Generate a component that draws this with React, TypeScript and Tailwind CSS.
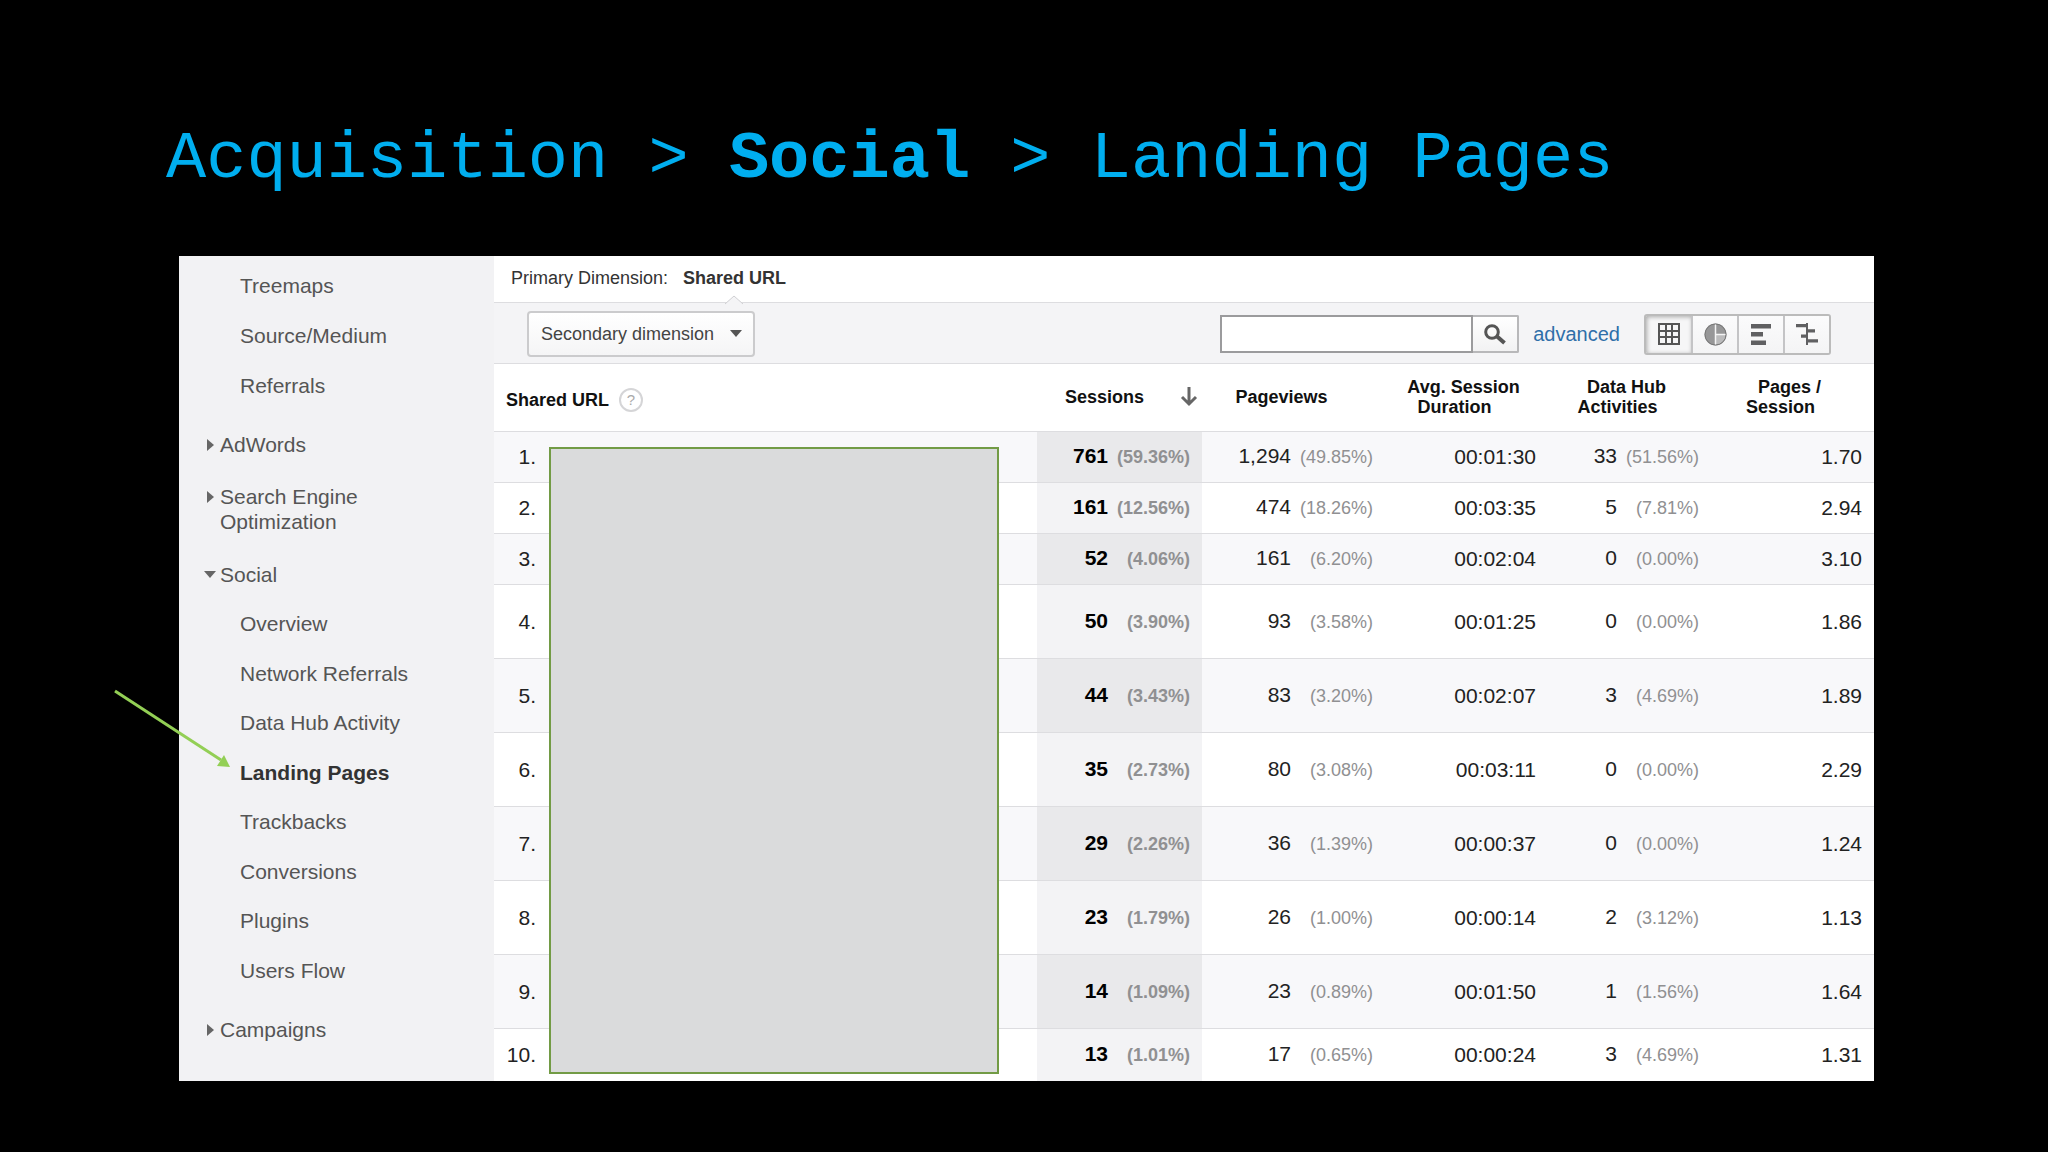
import React from "react";

type Row = {
  sessions: string;
  sessionsPct: string;
  views: string;
  viewsPct: string;
  duration: string;
  hub: string;
  hubPct: string;
  pages: string;
  tall?: boolean;
};

const rows: Row[] = [
  { sessions: "761", sessionsPct: "(59.36%)", views: "1,294", viewsPct: "(49.85%)", duration: "00:01:30", hub: "33", hubPct: "(51.56%)", pages: "1.70" },
  { sessions: "161", sessionsPct: "(12.56%)", views: "474", viewsPct: "(18.26%)", duration: "00:03:35", hub: "5", hubPct: "(7.81%)", pages: "2.94" },
  { sessions: "52", sessionsPct: "(4.06%)", views: "161", viewsPct: "(6.20%)", duration: "00:02:04", hub: "0", hubPct: "(0.00%)", pages: "3.10" },
  { sessions: "50", sessionsPct: "(3.90%)", views: "93", viewsPct: "(3.58%)", duration: "00:01:25", hub: "0", hubPct: "(0.00%)", pages: "1.86", tall: true },
  { sessions: "44", sessionsPct: "(3.43%)", views: "83", viewsPct: "(3.20%)", duration: "00:02:07", hub: "3", hubPct: "(4.69%)", pages: "1.89", tall: true },
  { sessions: "35", sessionsPct: "(2.73%)", views: "80", viewsPct: "(3.08%)", duration: "00:03:11", hub: "0", hubPct: "(0.00%)", pages: "2.29", tall: true },
  { sessions: "29", sessionsPct: "(2.26%)", views: "36", viewsPct: "(1.39%)", duration: "00:00:37", hub: "0", hubPct: "(0.00%)", pages: "1.24", tall: true },
  { sessions: "23", sessionsPct: "(1.79%)", views: "26", viewsPct: "(1.00%)", duration: "00:00:14", hub: "2", hubPct: "(3.12%)", pages: "1.13", tall: true },
  { sessions: "14", sessionsPct: "(1.09%)", views: "23", viewsPct: "(0.89%)", duration: "00:01:50", hub: "1", hubPct: "(1.56%)", pages: "1.64", tall: true },
  { sessions: "13", sessionsPct: "(1.01%)", views: "17", viewsPct: "(0.65%)", duration: "00:00:24", hub: "3", hubPct: "(4.69%)", pages: "1.31" },
];

function SubLinks({ items, active }: { items: string[]; active?: string }) {
  return (
    <>
      {items.map((item) => (
        <li key={item} className="flex items-center pl-[61px]">
          <a
            href="#"
            className={
              item === active
                ? "relative font-bold text-[#333]"
                : "text-[#555]"
            }
          >
            {item === active && <PointerArrow />}
            {item}
          </a>
        </li>
      ))}
    </>
  );
}

function PointerArrow() {
  return (
    <svg
      aria-hidden="true"
      width="118"
      height="80"
      viewBox="0 0 118 80"
      className="pointer-events-none absolute right-full bottom-[16px] mr-[8px]"
    >
      <line x1="1" y1="2" x2="107" y2="71" stroke="#93cf55" strokeWidth="3" />
      <path d="M116 78 L103 77 L110 66 Z" fill="#93cf55" />
    </svg>
  );
}

function Group({ label, open }: { label: string; open?: boolean }) {
  return (
    <button
      type="button"
      aria-expanded={!!open}
      className="flex w-full items-start pl-[25px] text-left text-[#555]"
    >
      <span className="flex h-[25px] w-4 shrink-0 items-center">
        {open ? (
          <svg width="12" height="7" viewBox="0 0 12 7" aria-hidden="true">
            <path d="M0 0 H12 L6 7 Z" fill="#666" />
          </svg>
        ) : (
          <svg width="10" height="12" viewBox="0 0 10 12" aria-hidden="true">
            <path d="M3 0 L10 6 L3 12 Z" fill="#666" />
          </svg>
        )}
      </span>
      <span className="w-[160px]">{label}</span>
    </button>
  );
}

function Sidebar() {
  return (
    <nav
      aria-label="Reports"
      className="w-[315px] shrink-0 bg-[#f2f2f4] pt-[5px] text-[21px] leading-[25px]"
    >
      <ul className="grid h-[149px] auto-rows-fr">
        <SubLinks items={["Treemaps", "Source/Medium", "Referrals"]} />
      </ul>
      <div className="mt-[22px]">
        <Group label="AdWords" />
      </div>
      <div className="mt-[27px]">
        <Group label="Search Engine Optimization" />
      </div>
      <div className="mt-[28px]">
        <Group label="Social" open />
      </div>
      <ul className="mt-[12px] grid h-[396px] auto-rows-fr">
        <SubLinks
          active="Landing Pages"
          items={[
            "Overview",
            "Network Referrals",
            "Data Hub Activity",
            "Landing Pages",
            "Trackbacks",
            "Conversions",
            "Plugins",
            "Users Flow",
          ]}
        />
      </ul>
      <div className="mt-[22px]">
        <Group label="Campaigns" />
      </div>
    </nav>
  );
}

function Toolbar() {
  const view =
    "flex w-[46px] items-center justify-center border-l-2 border-[#c4c4c6] bg-linear-to-b from-[#fbfbfc] to-[#f4f4f5]";
  return (
    <div className="flex h-[61px] items-center border-b border-[#dddde0] bg-[#f4f4f6] pt-[2px] pr-[43px] pl-[33px]">
      <div className="relative">
        <select
          aria-label="Secondary dimension"
          className="h-[46px] w-[228px] appearance-none rounded-[4px] border-2 border-[#cbcbcd] bg-linear-to-b from-white to-[#f5f5f6] pl-[12px] text-[18px] text-[#444]"
        >
          <option>Secondary dimension</option>
        </select>
        <svg
          width="12"
          height="7"
          viewBox="0 0 12 7"
          aria-hidden="true"
          className="pointer-events-none absolute top-[19px] right-[13px]"
        >
          <path d="M0 0 H12 L6 7 Z" fill="#555" />
        </svg>
      </div>
      <form className="ml-auto flex items-center" onSubmit={(e) => e.preventDefault()}>
        <input
          type="text"
          aria-label="Search table"
          className="h-[38px] w-[253px] border-2 border-[#9b9b9d] bg-white px-2 text-[18px] outline-none"
        />
        <button
          type="submit"
          aria-label="Search"
          className="flex h-[38px] w-[46px] items-center justify-center rounded-r-[2px] border-2 border-l-0 border-[#b8b8ba] bg-linear-to-b from-white to-[#f2f2f3]"
        >
          <svg width="22" height="21" viewBox="0 0 22 21" fill="none" aria-hidden="true">
            <circle cx="8" cy="8" r="6.3" stroke="#555" strokeWidth="3" />
            <path d="M12.5 12 L20.5 19" stroke="#555" strokeWidth="4" />
          </svg>
        </button>
      </form>
      <a href="#" className="ml-[14px] text-[20px] leading-[24px] text-[#2f6fa9]">
        advanced
      </a>
      <div
        role="group"
        aria-label="View"
        className="ml-[24px] flex h-[41px] overflow-hidden rounded-[3px] border-2 border-[#bbb]"
      >
        <button
          type="button"
          aria-label="Data"
          aria-pressed="true"
          className="flex w-[45px] items-center justify-center bg-[#f6f6f7] shadow-[inset_1px_1px_4px_#aaa]"
        >
          <svg width="22" height="22" viewBox="0 0 22 22" fill="none" stroke="#555" strokeWidth="2" aria-hidden="true">
            <path d="M1 1 H21 V21 H1 Z M1 8 H21 M1 14 H21 M8 1 V21 M14 1 V21" />
          </svg>
        </button>
        <button type="button" aria-label="Percentage" className={view}>
          <svg width="23" height="23" viewBox="0 0 23 23" aria-hidden="true">
            <circle cx="11.5" cy="11.5" r="11" fill="#979798" />
            <path d="M12 12 H22 A10.5 10.5 0 0 1 12 22 Z" fill="#bbbbbc" />
            <path d="M11.5 1 V22 M11.5 11.5 H22" stroke="#f4f4f4" strokeWidth="1.5" />
            <circle cx="11.5" cy="11.5" r="10.5" fill="none" stroke="#777" />
          </svg>
        </button>
        <button type="button" aria-label="Performance" className={view}>
          <svg width="21" height="21" viewBox="0 0 21 21" fill="#606062" aria-hidden="true">
            <path d="M0 0 H20 V4.5 H0 Z M0 8 H12 V12.5 H0 Z M0 16.5 H15 V21 H0 Z" />
          </svg>
        </button>
        <button type="button" aria-label="Comparison" className={view}>
          <svg width="22" height="22" viewBox="0 0 22 22" fill="#606062" aria-hidden="true">
            <path d="M10 0 H12 V22 H10 Z M0 1 H11 V4.3 H0 Z M11 6.3 H19 V9.6 H11 Z M5 11.5 H11 V14.8 H5 Z M11 16.3 H22 V19.6 H11 Z" />
          </svg>
        </button>
      </div>
    </div>
  );
}

function Metric({ value, pct }: { value: string; pct: string }) {
  return (
    <div className="flex items-baseline justify-end">
      {value}
      <span className="w-[82px] text-right text-[18px] text-[#909092]">{pct}</span>
    </div>
  );
}

function TwoLine({ top, bottom }: { top: string; bottom: string }) {
  return (
    <>
      <span className="block pl-[18px]">{top}</span>{" "}
      <span className="block">{bottom}</span>
    </>
  );
}

function ReportTable() {
  return (
    <div className="relative">
      <table className="w-full table-fixed border-collapse text-[21px] leading-[25px] text-[#222]">
        <colgroup>
          <col />
          <col className="w-[165px]" />
          <col className="w-[183px]" />
          <col className="w-[163px]" />
          <col className="w-[163px]" />
          <col className="w-[163px]" />
        </colgroup>
        <thead>
          <tr className="h-[67px] border-b border-[#dddde0] text-[18px] leading-[20px] text-[#111]">
            <th scope="col" className="pt-[6px] pl-[12px] text-left">
              <span className="flex items-center gap-[10px]">
                Shared URL
                <button
                  type="button"
                  aria-label="Help"
                  className="flex size-6 items-center justify-center rounded-full border-2 border-[#d5d5d7] text-[15px] font-normal text-[#aaa]"
                >
                  ?
                </button>
              </span>
            </th>
            <th scope="col" aria-sort="descending" className="pr-[4px] pl-[28px]">
              <button type="button" className="flex w-full items-center justify-between font-bold">
                Sessions
                <svg width="18" height="20" viewBox="0 0 18 20" fill="none" stroke="#666" strokeWidth="3" aria-hidden="true">
                  <path d="M9 0 V17 M2 10 L9 17 L16 10" />
                </svg>
              </button>
            </th>
            <th scope="col" className="pr-[24px]">Pageviews</th>
            <th scope="col" className="pr-[24px]">
              <TwoLine top="Avg. Session" bottom="Duration" />
            </th>
            <th scope="col" className="pr-[24px]">
              <TwoLine top="Data Hub" bottom="Activities" />
            </th>
            <th scope="col" className="pr-[24px]">
              <TwoLine top="Pages /" bottom="Session" />
            </th>
          </tr>
        </thead>
        <tbody>
          {rows.map((r, i) => (
            <tr
              key={i}
              className={`border-b border-[#dddde0] last:border-b-0 odd:bg-[#f8f8fa] even:bg-white ${r.tall ? "h-[74px]" : "h-[51px] last:h-[53px]"}`}
            >
              <td className="p-0">
                <span className="block w-[42px] text-right">{i + 1}.</span>
              </td>
              <td className={`pr-[12px] font-bold text-black ${i % 2 === 0 ? "bg-[#e9e9eb]" : "bg-[#f3f3f5]"}`}>
                <Metric value={r.sessions} pct={r.sessionsPct} />
              </td>
              <td className="pr-[12px]">
                <Metric value={r.views} pct={r.viewsPct} />
              </td>
              <td className="pr-[12px] text-right">{r.duration}</td>
              <td className="pr-[12px]">
                <Metric value={r.hub} pct={r.hubPct} />
              </td>
              <td className="pr-[12px] text-right">{r.pages}</td>
            </tr>
          ))}
        </tbody>
      </table>
      <div
        aria-hidden="true"
        className="absolute top-[83px] right-[875px] bottom-[7px] left-[55px] border-2 border-[#729b45] bg-[#dadbdc]"
      />
    </div>
  );
}

export default function App() {
  return (
    <main className="min-h-screen bg-black pt-[117px] pr-[174px] pb-[70px] pl-[179px] font-['Liberation_Sans',Arial,sans-serif]">
      <h1 className="-ml-[13px] font-['Liberation_Mono',monospace] text-[67px] leading-[84px] whitespace-nowrap text-[#00aeef]">
        Acquisition &gt; <b>Social</b> &gt; Landing Pages
      </h1>
      <div className="mt-[55px] flex">
        <Sidebar />
        <section className="min-w-0 flex-1 bg-white">
          <div className="flex h-[47px] items-center gap-[15px] border-b border-[#dddde0] pb-[2px] pl-[17px] text-[18px] leading-[20px] text-[#333]">
            <span>Primary Dimension:</span>
            <span className="relative font-bold">
              Shared URL
              <svg
                width="18"
                height="10"
                viewBox="0 0 18 10"
                aria-hidden="true"
                className="absolute top-[27px] left-[42px]"
              >
                <path d="M0 9 L9 1 L18 9 V10 H0 Z" fill="#f4f4f6" />
                <path d="M0 9 L9 1 L18 9" fill="none" stroke="#cfcfd2" />
              </svg>
            </span>
          </div>
          <Toolbar />
          <ReportTable />
        </section>
      </div>
    </main>
  );
}
